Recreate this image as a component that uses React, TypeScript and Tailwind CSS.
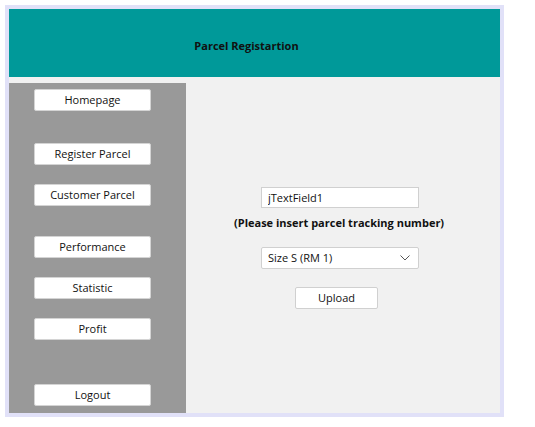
export default function App() {
  const font = { fontFamily: '"Open Sans", "Noto Sans", sans-serif' }

  const navBtn =
    'w-[117px] h-[22px] bg-white border border-[#d4d4d4] rounded-[2px] text-[11px] text-[#111] flex items-center justify-center'

  return (
    <div className="w-[535px] h-[427px] bg-white pt-[5px] pl-[5px]" style={font}>
      <div className="w-[499px] h-[412px] border-4 border-[#e1e1f8] bg-[#f1f1f1] flex flex-col">
        {/* header */}
        <div className="h-[68px] bg-[#009999] flex items-center justify-center pr-[16px] pt-[6px]">
          <span className="text-[11px] font-bold text-[#111]">Parcel Registartion</span>
        </div>

        <div className="flex flex-1">
          {/* sidebar */}
          <div className="w-[177px] mt-[6px] bg-[#999999] flex flex-col pl-[25px] pt-[6px]">
            <button className={navBtn}>Homepage</button>
            <button className={navBtn + ' mt-[32px]'}>Register Parcel</button>
            <button className={navBtn + ' mt-[19px]'}>Customer Parcel</button>
            <button className={navBtn + ' mt-[30px]'}>Performance</button>
            <button className={navBtn + ' mt-[19px]'}>Statistic</button>
            <button className={navBtn + ' mt-[19px]'}>Profit</button>
            <button className={navBtn + ' mt-[44px]'}>Logout</button>
          </div>

          {/* form */}
          <div className="flex-1 flex flex-col pt-[110px]">
            <input
              defaultValue="jTextField1"
              className="ml-[75px] w-[158px] h-[21px] bg-white border border-[#d0d0d0] px-[6px] text-[11px] text-[#111] outline-none"
            />
            <div className="ml-[48px] mt-[7px] h-[16px] leading-[16px] text-[11px] font-bold text-[#111]">
              (Please insert parcel tracking number)
            </div>
            <div className="ml-[75px] mt-[16px] w-[158px] h-[22px] bg-white border border-[#d0d0d0] rounded-[2px] pl-[6px] pr-[8px] flex items-center justify-between text-[11px] text-[#111]">
              <span>Size S (RM 1)</span>
              <svg width="10" height="6" viewBox="0 0 10 6" fill="none" stroke="#555" strokeWidth="1">
                <path d="M0.5 0.5 L5 5 L9.5 0.5" />
              </svg>
            </div>
            <button className="ml-[109px] mt-[18px] w-[83px] h-[22px] bg-white border border-[#d0d0d0] rounded-[2px] text-[11px] text-[#111] flex items-center justify-center">
              Upload
            </button>
          </div>
        </div>
      </div>
    </div>
  )
}
